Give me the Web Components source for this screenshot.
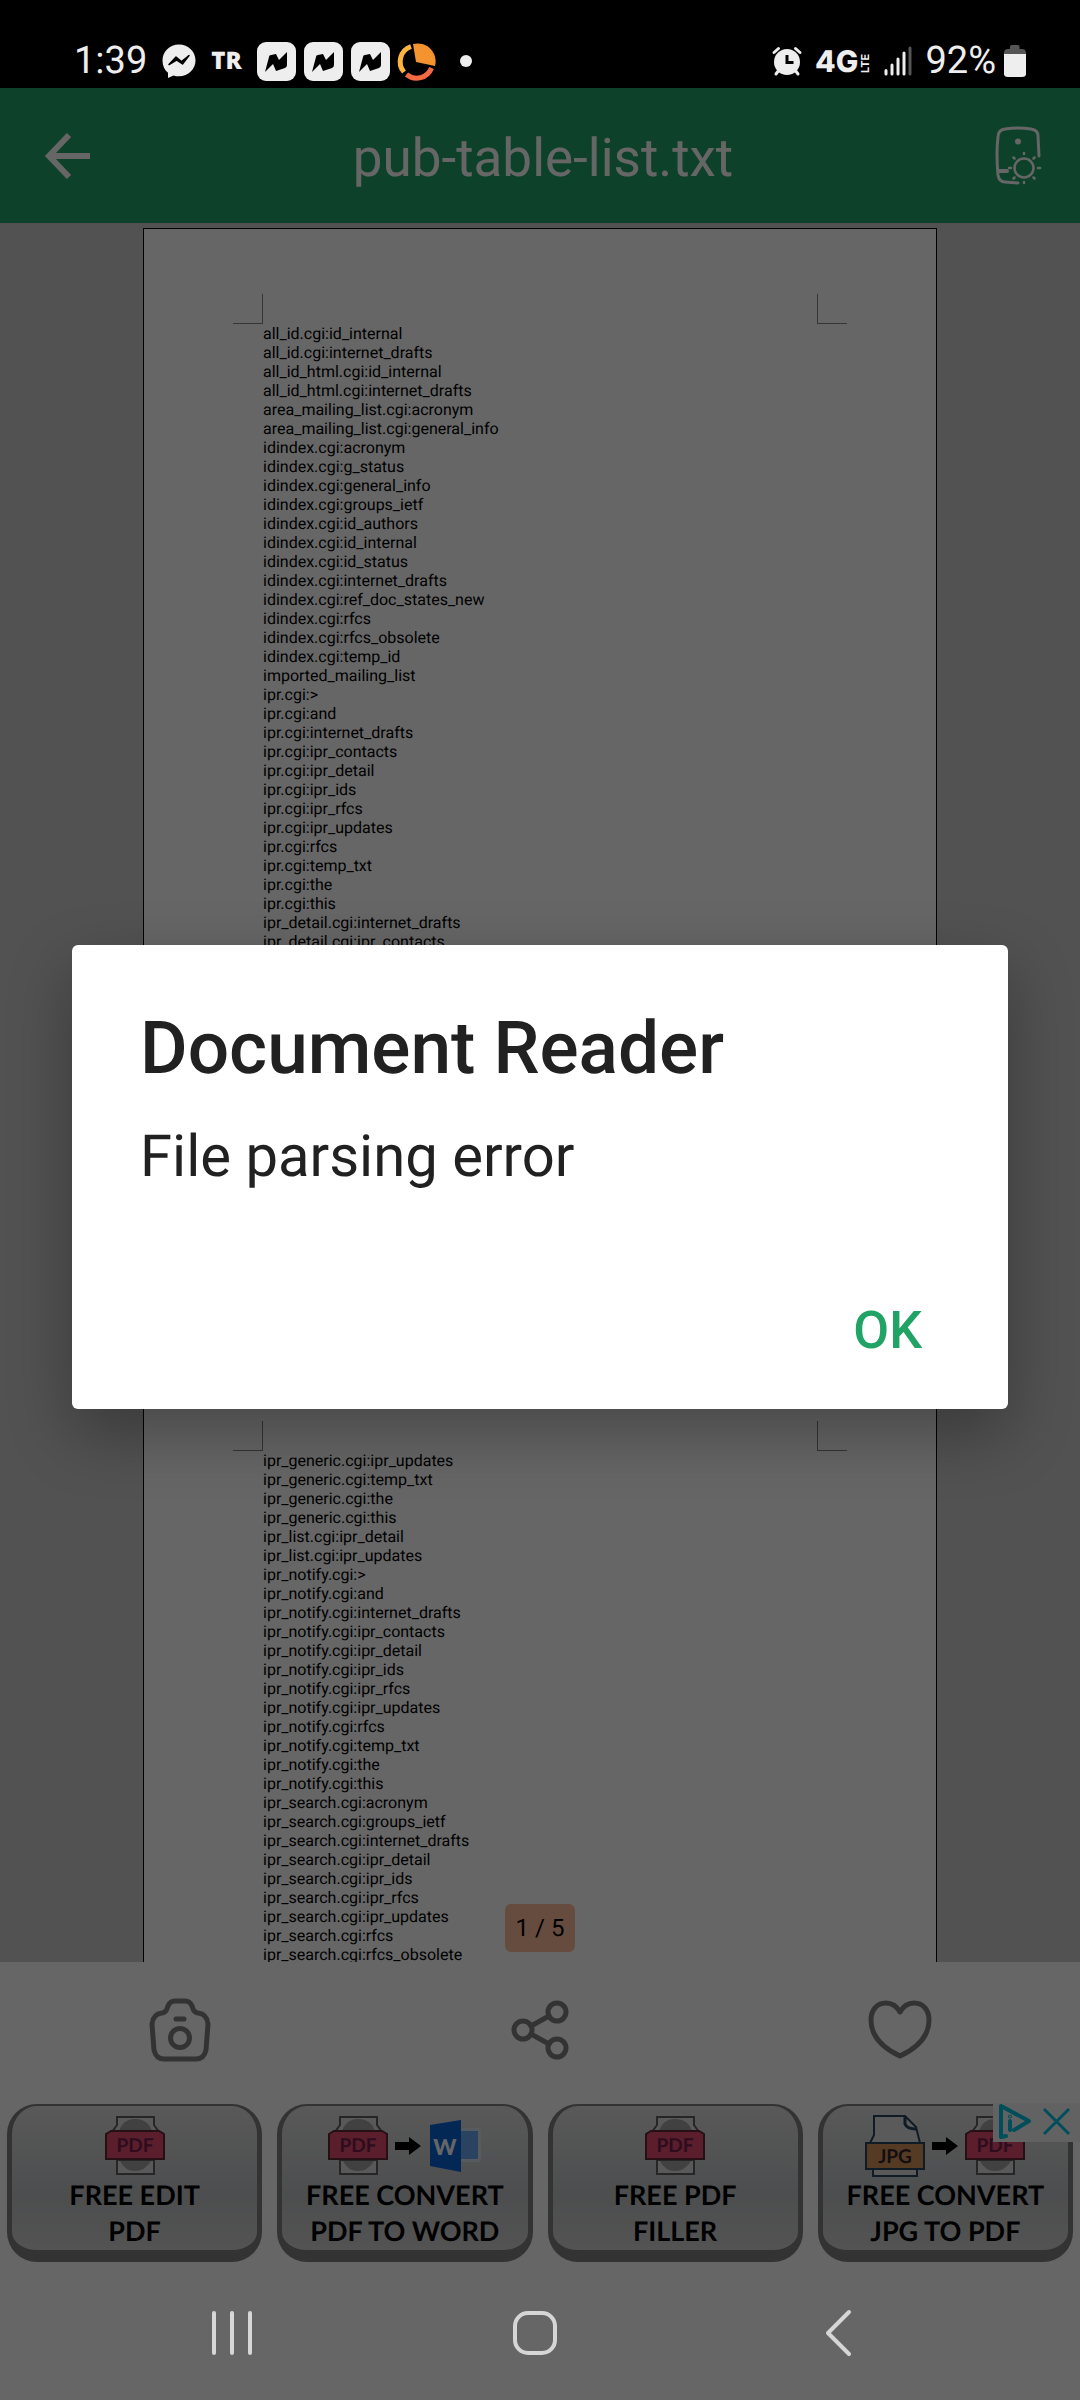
<!DOCTYPE html>
<html lang="en">
<head>
<meta charset="utf-8">
<meta name="viewport" content="width=device-width, initial-scale=1">
<title>Document Reader</title>
<style>
  html, body { height: 100%; margin: 0; }
  body { display: flex; flex-direction: column; background: #666; font-family: Roboto, "Liberation Sans", sans-serif; text-rendering: geometricPrecision; }
</style>
</head>
<body>
<status-bar time="1:39" battery="92%"></status-bar>
<app-window>
  <app-header>pub-table-list.txt</app-header>
  <doc-viewer position="1 / 5">
    <doc-page>all_id.cgi:id_internal
all_id.cgi:internet_drafts
all_id_html.cgi:id_internal
all_id_html.cgi:internet_drafts
area_mailing_list.cgi:acronym
area_mailing_list.cgi:general_info
idindex.cgi:acronym
idindex.cgi:g_status
idindex.cgi:general_info
idindex.cgi:groups_ietf
idindex.cgi:id_authors
idindex.cgi:id_internal
idindex.cgi:id_status
idindex.cgi:internet_drafts
idindex.cgi:ref_doc_states_new
idindex.cgi:rfcs
idindex.cgi:rfcs_obsolete
idindex.cgi:temp_id
imported_mailing_list
ipr.cgi:&gt;
ipr.cgi:and
ipr.cgi:internet_drafts
ipr.cgi:ipr_contacts
ipr.cgi:ipr_detail
ipr.cgi:ipr_ids
ipr.cgi:ipr_rfcs
ipr.cgi:ipr_updates
ipr.cgi:rfcs
ipr.cgi:temp_txt
ipr.cgi:the
ipr.cgi:this
ipr_detail.cgi:internet_drafts
ipr_detail.cgi:ipr_contacts</doc-page>
    <doc-page>ipr_generic.cgi:ipr_updates
ipr_generic.cgi:temp_txt
ipr_generic.cgi:the
ipr_generic.cgi:this
ipr_list.cgi:ipr_detail
ipr_list.cgi:ipr_updates
ipr_notify.cgi:&gt;
ipr_notify.cgi:and
ipr_notify.cgi:internet_drafts
ipr_notify.cgi:ipr_contacts
ipr_notify.cgi:ipr_detail
ipr_notify.cgi:ipr_ids
ipr_notify.cgi:ipr_rfcs
ipr_notify.cgi:ipr_updates
ipr_notify.cgi:rfcs
ipr_notify.cgi:temp_txt
ipr_notify.cgi:the
ipr_notify.cgi:this
ipr_search.cgi:acronym
ipr_search.cgi:groups_ietf
ipr_search.cgi:internet_drafts
ipr_search.cgi:ipr_detail
ipr_search.cgi:ipr_ids
ipr_search.cgi:ipr_rfcs
ipr_search.cgi:ipr_updates
ipr_search.cgi:rfcs
ipr_search.cgi:rfcs_obsolete</doc-page>
  </doc-viewer>
  <tool-bar></tool-bar>
  <ad-banner>
    <ad-card icons="pdf">FREE EDIT<br>PDF</ad-card>
    <ad-card icons="pdf arrow word">FREE CONVERT<br>PDF TO WORD</ad-card>
    <ad-card icons="pdf">FREE PDF<br>FILLER</ad-card>
    <ad-card icons="jpg arrow pdf">FREE CONVERT<br>JPG TO PDF</ad-card>
  </ad-banner>
  <alert-dialog slot="dialog">
    <span slot="title">Document Reader</span>
    File parsing error
    <span slot="action">OK</span>
  </alert-dialog>
</app-window>
<nav-bar></nav-bar>

<script>
const define = (name, build) => customElements.define(name, class extends HTMLElement {
  constructor() {
    super();
    this.attachShadow({ mode: "open" }).innerHTML = build(this);
  }
});

const RESET = `
  *, :host { box-sizing: border-box; }
  button { border: 0; padding: 0; margin: 0; background: none; color: inherit; font: inherit; text-rendering: inherit; display: flex; align-items: center; justify-content: center; }
  svg { display: block; flex: none; overflow: visible; }`;

const BOLT = `<svg width="39" height="39" viewBox="0 0 39 39"><rect width="39" height="39" rx="9" fill="#eee"/><path d="M8 30 L12 15 Q12 13 14 13 L19 12 L22 18 L30 10 L30 23 Q30 25 28 26 L19 29 L16 22 Z" fill="#000"/></svg>`;

define("status-bar", el => `<style>${RESET}
  :host { display: flex; flex: none; height: 88px; padding: 34px 54px 0 74px; align-items: center; justify-content: space-between; background: #000; color: #eee; font-size: 38px; line-height: 52px; }
  .group { display: flex; align-items: center; }
  .left { gap: 15px; }
  .apps { display: flex; align-items: center; gap: 8px; }
  .tr { font: 800 24px/52px "Open Sans", sans-serif; }
  .right { gap: 13px; }
  .charge { display: flex; align-items: center; gap: 8px; }
</style>
<div class="group left">
  <span>${el.getAttribute("time")}</span>
  <svg width="34" height="34" viewBox="0 0 34 34"><path d="M17 .5C7.500 .5 .5 7.500 .5 16.500c0 5 2 9.500 5.500 12.300V34l5.500-2.600c1.800.6 3.600.8 5.500.8 9.500 0 16.500-7 16.500-15.700S26.500.5 17 .5z" fill="#eee"/><path d="M7 20.500l7-7.500 5.500 4.500L27 11.500l-6.500 8.500-6-4z" fill="#000" stroke="#000" stroke-width="1.500" stroke-linejoin="round"/></svg>
  <span class="tr">TR</span>
  <div class="apps">${BOLT}${BOLT}${BOLT}
    <svg width="39" height="39" viewBox="0 0 39 39"><path d="M18 20 L15 2 A18 18 0 0 1 37 24 Z" fill="#f59331"/><path d="M13 4.500A16 16 0 0 0 6 30" fill="none" stroke="#ffb43f" stroke-width="5"/><path d="M8.500 32.500A16 16 0 0 0 33.500 26" fill="none" stroke="#f66a43" stroke-width="5"/></svg>
  </div>
  <svg width="28" height="14" viewBox="0 0 28 14"><circle cx="14" cy="7" r="6" fill="#eee"/></svg>
</div>
<div class="group right">
  <svg width="30" height="30" viewBox="0 0 30 30"><g stroke="#eee" stroke-width="3" stroke-linecap="round"><path d="M2 6.500L6.500 2.500M28 6.500L23.500 2.500M4 28l3-4M26 28l-3-4"/></g><circle cx="15" cy="16" r="13" fill="#eee"/><path d="M15 9v7.500h6.500" fill="none" stroke="#000" stroke-width="3"/></svg>
  <svg width="56" height="28" viewBox="0 0 56 28" fill="#eee" font-family="Inter, sans-serif"><text x="0" y="25" font-size="30" font-weight="800">4G</text><text x="0" y="0" font-size="11" font-weight="700" transform="translate(54 26) rotate(-90)">LTE</text></svg>
  <svg width="28" height="30" viewBox="0 0 28 30" stroke="#eee" stroke-width="3" stroke-linecap="round"><path d="M2 24.500V28M8 19V28M14 13V28M20 7V28"/><path d="M26 2V28" stroke="#555"/></svg>
  <div class="charge"><span>${el.getAttribute("battery")}</span>
  <svg width="22" height="33" viewBox="0 0 22 33"><path d="M6 1.500Q6 0 7.500 0H14Q15.500 0 15.500 1.500V4H18Q22 4 22 8V11H0V8Q0 4 4 4H6z" fill="#555"/><path d="M0 9H22V29Q22 32 18 32H4Q0 32 0 29z" fill="#eee"/></svg></div>
</div>`);

/* Everything between the system bars; an open dialog dims all of it. */
define("app-window", () => `<style>${RESET}
  :host { display: flex; flex-direction: column; flex: 1; min-height: 0; position: relative; background: #fff; }
  .scrim { position: absolute; inset: 0; display: flex; align-items: center; justify-content: center; padding: 0 72px; background: rgba(0, 0, 0, .6); }
</style><slot></slot><div class="scrim"><slot name="dialog"></slot></div>`);

define("app-header", () => `<style>${RESET}
  :host { display: flex; flex: none; align-items: center; height: 135px; padding: 0 38px 0 44px; background: #21a366; color: #fff; }
  h1 { flex: 1; margin: 0; padding-top: 4px; text-align: center; font-size: 53px; line-height: 64px; font-weight: 400; }
</style>
<button aria-label="Back"><svg width="48" height="48" viewBox="0 0 48 48" fill="none" stroke="#fff" stroke-width="6"><path d="M46 24H6M25 3L5 24l20 21"/></svg></button>
<h1><slot></slot></h1>
<button aria-label="Screen brightness"><svg width="48" height="60" viewBox="0 0 48 60" fill="none" stroke="#fff" stroke-width="3" stroke-linecap="round"><path d="M45 30L44 10Q44 4 37 3Q24 1 11 3Q4 4 4 11Q2 27 4 49Q5 56 11 56L24 57"/><path d="M5 45h8" stroke-width="4"/><circle cx="24" cy="15.500" r="3" fill="#fff" stroke="none"/><circle cx="30" cy="42" r="9.500" stroke-width="2.500"/><path d="M30 27v1M30 56v1M15 42h2M44 42h2M19.500 31.500l1 1M40.500 31.500l-1 1M19.500 52.500l1-1M40.500 52.500l-1-1" stroke-width="2.500"/></svg></button>`);

define("doc-viewer", el => `<style>${RESET}
  :host { display: flex; flex-direction: column; flex: 1; min-height: 0; align-items: center; gap: 4px; padding-top: 5px; position: relative; overflow: hidden; background: #cdcdcd; }
  .position { position: absolute; bottom: 10px; padding: 0 11px; border-radius: 6px; background: #ffbe9e; color: #000; font-size: 24px; line-height: 48px; }
</style><slot></slot><div class="position">${el.getAttribute("position")}</div>`);

define("doc-page", () => `<style>${RESET}
  :host { display: flex; flex-direction: column; flex: none; width: 794px; max-width: 100%; aspect-ratio: 794 / 1123; border: 1px solid #000; background: #fff; color: #000; }
  .marks { display: flex; flex: none; align-items: flex-end; justify-content: space-between; height: 95px; padding: 0 89px; }
  .marks i { width: 30px; height: 30px; border-bottom: 1px solid #868686; }
  .marks i:first-child { border-right: 1px solid #868686; }
  .marks i:last-child { border-left: 1px solid #868686; }
  pre { margin: 0; padding: 0 119px; font: 16px/19px Roboto, sans-serif; }
</style><div class="marks"><i></i><i></i></div><pre><slot></slot></pre>`);

define("tool-bar", () => `<style>${RESET}
  :host { display: flex; flex: none; height: 136px; background: #fff; }
  button { flex: 1; }
  svg { fill: none; stroke: #808080; stroke-width: 5; stroke-linejoin: round; stroke-linecap: round; }
</style>
<button aria-label="Take a snapshot"><svg width="64" height="64" viewBox="0 0 64 64"><path d="M32 3H27Q22 3 20 8Q18 15 14 15Q5 16 4 26L6 52Q8 61 16 61H48Q56 61 58 52L60 26Q59 16 50 15Q46 15 44 8Q42 3 37 3Z"/><path d="M28 21h8"/><circle cx="32" cy="40" r="9.500"/></svg></button>
<button aria-label="Share"><svg width="64" height="64" viewBox="0 0 64 64"><circle cx="15" cy="32" r="9"/><circle cx="49" cy="14" r="9"/><circle cx="49" cy="50" r="9"/><path d="M23 28L41 18M23 36L41 46"/></svg></button>
<button aria-label="Add to favourites"><svg width="64" height="64" viewBox="0 0 64 64"><path d="M32 14C28 7 22 5 18 5C8 5 3 13 3 22C3 40 17 51 32 58C47 51 61 40 61 22C61 13 56 5 46 5C42 5 36 7 32 14Z"/></svg></button>`);

define("ad-banner", () => `<style>${RESET}
  :host { display: grid; flex: none; grid-template-columns: repeat(4, 1fr); gap: 15px; padding: 6px 7px 3px; position: relative; background: #fff; }
  .choices { position: absolute; top: 5px; right: 0; display: flex; gap: 12px; padding: 1px 10px 3px 5px; background: #f6f6f6; }
</style><slot></slot>
<div class="choices">
  <button aria-label="Ad choices"><svg width="33" height="35" viewBox="0 0 33 35" fill="none" stroke="#00c4e4" stroke-width="4" stroke-linejoin="round" stroke-linecap="round"><path d="M8 32L3 33V2L31 17L16 26"/><path d="M12 17v9"/><circle cx="12" cy="12.500" r=".5" stroke-width="3"/></svg></button>
  <button aria-label="Close ad"><svg width="27" height="35" viewBox="0 0 27 35" stroke="#00c4e4" stroke-width="3"><path d="M1 5L26 30M26 5L1 30"/></svg></button>
</div>`);

const PDF = `<svg width="60" height="60" viewBox="0 0 60 60"><path d="M12 1H51V9L54 15V58H11V15L12 9Z" fill="none"/><path d="M12 1H49V9L54 16H7L12 9Z" fill="#dedede" stroke="#606060" stroke-width="2"/><path d="M12 44H49V58H12Z" fill="#dedede" stroke="#606060" stroke-width="2"/><path d="M14 15Q18 3 30 3Q43 3 47 15ZM15 45H46Q40 55 30 55Q20 55 15 45Z" fill="#a2a2a6"/><path d="M1 18L6 15H54L59 18V43H1Z" fill="#e04c70" stroke="#602838" stroke-width="2"/><text x="30" y="36" text-anchor="middle" font-family="Lato, sans-serif" font-size="19" font-weight="700" fill="#74204a">PDF</text></svg>`;
const AD_ICONS = {
  pdf: PDF,
  jpg: `<svg width="60" height="62" viewBox="0 0 60 62"><path d="M9 1H40L51 12L55 28H5L9 20Z" fill="#e0e0e0" stroke="#26485c" stroke-width="2"/><path d="M40 1V9Q42 14 51 14" fill="none" stroke="#26485c" stroke-width="3"/><path d="M8 54V61H52V54" fill="#e0e0e0" stroke="#26485c" stroke-width="2"/><rect x="1" y="28" width="58" height="26" fill="#d8935a" stroke="#26485c" stroke-width="2"/><text x="30" y="48" text-anchor="middle" font-family="Lato, sans-serif" font-size="19" font-weight="700" fill="#30242c">JPG</text></svg>`,
  arrow: `<svg width="26" height="18" viewBox="0 0 26 18"><path d="M0 5H14V0L26 9L14 18V13H0Z" fill="#000"/></svg>`,
  word: `<svg width="54" height="52" viewBox="0 0 54 52"><rect x="28" y="8" width="25" height="34" rx="3" fill="#dce4ea"/><rect x="30" y="11" width="20" height="28" fill="#68a8f0"/><path d="M2 5L33 0V52L2 46Z" fill="#0a64d8"/><text x="17" y="35" text-anchor="middle" font-family="Lato, sans-serif" font-size="22" font-weight="900" fill="#fff">W</text></svg>`
};
define("ad-card", el => `<style>${RESET}
  :host { display: block; min-width: 0; }
  a { display: flex; flex-direction: column; align-items: center; height: 158px; padding-top: 9px; border: solid #808080; border-width: 2px 5px 12px; border-radius: 30px; background: linear-gradient(#dedede, #c8cacc 45%, #c0c2c4 62%, #d0d0d0); color: #000; text-align: center; text-decoration: none; font: 700 27px/36px Lato, sans-serif; white-space: nowrap; }
  .icons { display: flex; align-items: center; height: 62px; gap: 7px; }
</style><a href="#"><span class="icons">${el.getAttribute("icons").split(" ").map(n => AD_ICONS[n]).join("")}</span><span><slot></slot></span></a>`);

define("alert-dialog", () => `<style>${RESET}
  :host { display: block; width: 100%; }
  section { display: flex; flex-direction: column; padding: 60px 68px 28px; border-radius: 6px; background: #fff; color: #212121; box-shadow: 0 24px 64px rgba(0, 0, 0, .3); }
  h2 { margin: 0; font-size: 73px; line-height: 86px; font-weight: 500; }
  p { margin: 0; padding-top: 32px; font-size: 58px; line-height: 68px; }
  footer { display: flex; justify-content: flex-end; padding-top: 90px; }
  button { height: 100px; padding: 0 18px; color: #21a366; font-size: 52px; font-weight: 500; }
</style>
<section role="alertdialog" aria-labelledby="t" aria-describedby="m">
  <h2 id="t"><slot name="title"></slot></h2>
  <p id="m"><slot></slot></p>
  <footer><button><slot name="action"></slot></button></footer>
</section>`);

define("nav-bar", () => `<style>${RESET}
  :host { display: flex; flex: none; height: 135px; padding: 0 91px 0 81px; background: #666; }
  button { flex: 1; }
  svg { fill: none; stroke: #d6d6d6; stroke-width: 4; stroke-linecap: round; stroke-linejoin: round; }
</style>
<button aria-label="Recent apps"><svg width="48" height="48" viewBox="0 0 48 48"><path d="M6 4V44M24 4V44M42 4V44"/></svg></button>
<button aria-label="Home"><svg width="48" height="48" viewBox="0 0 48 48"><rect x="4" y="4" width="40" height="40" rx="13"/></svg></button>
<button aria-label="Back"><svg width="48" height="48" viewBox="0 0 48 48"><path d="M35 3L14 24L35 45"/></svg></button>`);
</script>
</body>
</html>
